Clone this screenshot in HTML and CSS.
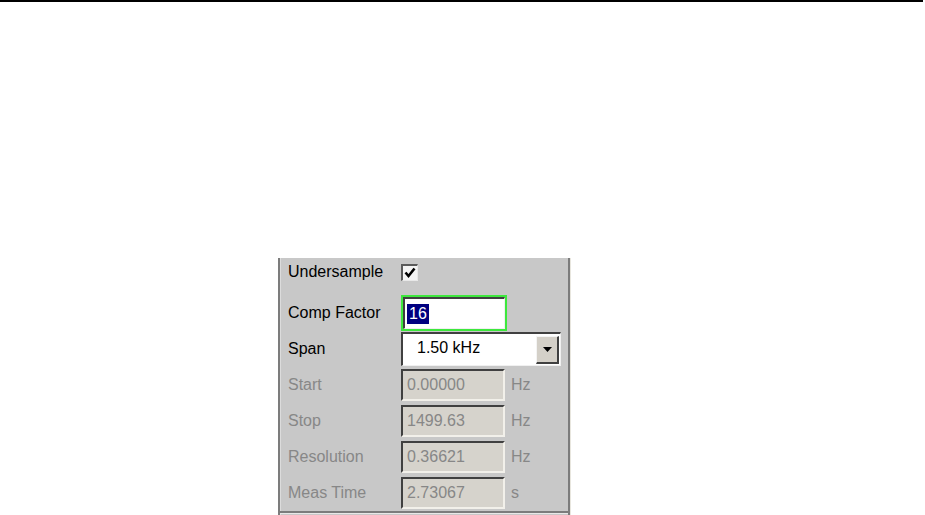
FILE: index.html
```html
<!DOCTYPE html>
<html>
  <head>
    <title>Undersample</title>
    <link rel="stylesheet" href="styles.css">
  </head>
  <body>
    <div class="rule"></div>
    <div class="panel">
      <div class="row row-check">
        <span class="label">Undersample</span>
        <span class="checkbox">
          <svg width="12" height="12" viewBox="0 0 12 12">
            <path d="M1.5 5.5 L4.5 9 L10.5 1.5" fill="none" stroke="#000" stroke-width="2.6"/>
          </svg>
        </span>
      </div>
      <div class="row row-comp">
        <span class="label">Comp Factor</span>
        <span class="focus">
          <span class="field edit"><span class="sel">16</span></span>
        </span>
      </div>
      <div class="row row-span">
        <span class="label">Span</span>
        <span class="field combo">
          <span class="combo-text">1.50 kHz</span>
          <span class="combo-btn">
            <svg width="9" height="5" viewBox="0 0 9 5"><path d="M0 0 H9 L4.5 5 Z" fill="#000"/></svg>
          </span>
        </span>
      </div>
      <div class="row row-ro">
        <span class="label dim">Start</span>
        <span class="field ro">0.00000</span>
        <span class="unit">Hz</span>
      </div>
      <div class="row row-ro">
        <span class="label dim">Stop</span>
        <span class="field ro">1499.63</span>
        <span class="unit">Hz</span>
      </div>
      <div class="row row-ro">
        <span class="label dim">Resolution</span>
        <span class="field ro">0.36621</span>
        <span class="unit">Hz</span>
      </div>
      <div class="row row-ro">
        <span class="label dim">Meas Time</span>
        <span class="field ro">2.73067</span>
        <span class="unit">s</span>
      </div>
      <div class="bottom-line"></div>
    </div>
  </body>
</html>
```

FILE: styles.css
```css
* {
  margin: 0;
  padding: 0;
  box-sizing: border-box;
}

body {
  width: 925px;
  height: 515px;
  overflow: hidden;
  background-color: #fff;
  font-family: "Liberation Sans", Arial, sans-serif;
  font-size: 16px;
  color: #000;
}

.rule {
  width: 923px;
  height: 2px;
  background-color: #000;
}

.panel {
  margin-left: 278px;
  margin-top: 256px;
  width: 292px;
  height: 257px;
  background-color: #c8c8c8;
  border-left: 2px solid #7c7c7c;
  border-right: 2px solid #7c7c7c;
  box-shadow: 1px 0 0 #e8e6de, inset 1px 0 0 #dcdcdc;
  padding: 3px 0 0 8px;
  display: flex;
  flex-direction: column;
}

.row {
  display: flex;
  align-items: center;
}
.label {
  width: 113px;
  flex: none;
}
.dim {
  color: #878787;
}

.row-check {
  height: 22px;
  margin-bottom: 12px;
}
.checkbox {
  width: 17px;
  height: 17px;
  background-color: #f4f4f4;
  border-top: 2px solid #5a5a5a;
  border-left: 2px solid #5a5a5a;
  border-right: 1px solid #e8e8e8;
  border-bottom: 1px solid #e8e8e8;
  display: flex;
  align-items: center;
  justify-content: center;
}

.row-comp {
  height: 36px;
  margin-bottom: 1px;
}
.focus {
  width: 106px;
  height: 36px;
  border: 2px solid #3de83d;
  display: flex;
}
.field {
  background-color: #fff;
  border-top: 2px solid #404040;
  border-left: 2px solid #404040;
  border-right: 1px solid #f0f0f0;
  border-bottom: 1px solid #f0f0f0;
  display: flex;
  align-items: center;
}
.edit {
  flex: 1;
  padding-left: 2px;
}
.sel {
  background-color: #000080;
  color: #fff;
  padding: 1px 2px;
  line-height: 18px;
}

.row-span {
  height: 34px;
  margin-bottom: 3px;
}
.combo {
  width: 160px;
  height: 34px;
  justify-content: space-between;
  padding-bottom: 3px;
}
.combo-text {
  padding-left: 14px;
}
.combo-btn {
  width: 23px;
  height: 28px;
  margin-right: 1px;
  margin-top: 3px;
  background-color: #d4d0c8;
  border-top: 1px solid #f4f4f4;
  border-left: 1px solid #f4f4f4;
  border-right: 2px solid #404040;
  border-bottom: 2px solid #404040;
  display: flex;
  align-items: center;
  justify-content: center;
}

.row-ro {
  height: 32px;
  margin-bottom: 4px;
}
.ro {
  width: 104px;
  height: 32px;
  background-color: #d6d3cc;
  color: #878787;
  padding-left: 4px;
  border-right: 2px solid #f2f0ea;
  border-bottom: 2px solid #f2f0ea;
}
.unit {
  margin-left: 6px;
  color: #878787;
}

.bottom-line {
  margin-left: -8px;
  margin-top: -2px;
  height: 2px;
  background-color: #7c7c7c;
  box-shadow: 0 1px 0 #e8e8e8;
}
```
